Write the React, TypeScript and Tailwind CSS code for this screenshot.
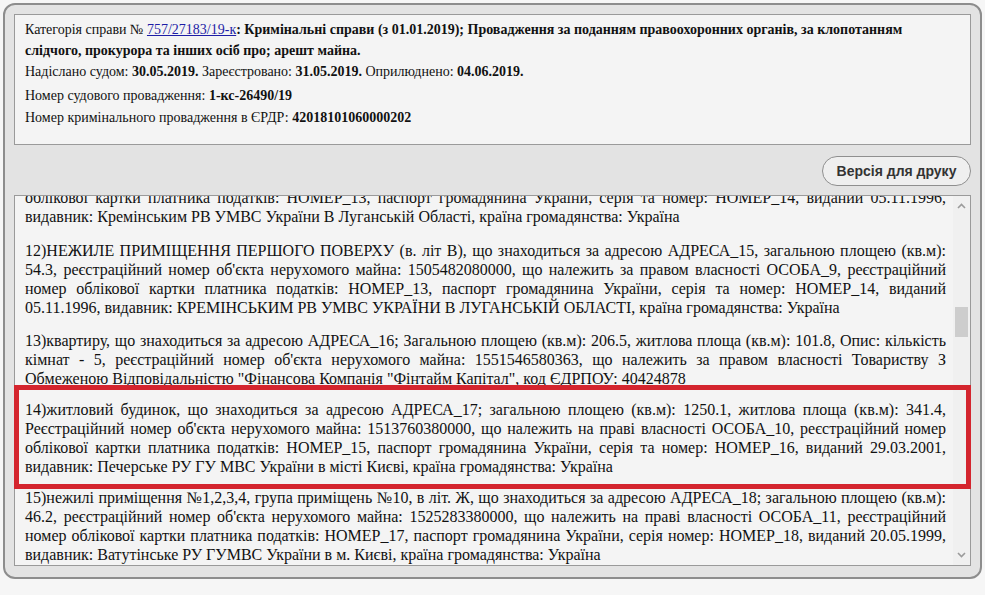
export default function App() {
  const paragraphs = [
    "12)НЕЖИЛЕ ПРИМІЩЕННЯ ПЕРШОГО ПОВЕРХУ (в. літ В), що знаходиться за адресою АДРЕСА_15, загальною площею (кв.м): 54.3, реєстраційний номер об'єкта нерухомого майна: 1505482080000, що належить за правом власності ОСОБА_9, реєстраційний номер облікової картки платника податків: НОМЕР_13, паспорт громадянина України, серія та номер: НОМЕР_14, виданий 05.11.1996, видавник: КРЕМІНСЬКИМ РВ УМВС УКРАЇНИ В ЛУГАНСЬКІЙ ОБЛАСТІ, країна громадянства: Україна",
    "13)квартиру, що знаходиться за адресою АДРЕСА_16; Загальною площею (кв.м): 206.5, житлова площа (кв.м): 101.8, Опис: кількість кімнат - 5, реєстраційний номер об'єкта нерухомого майна: 1551546580363, що належить за правом власності Товариству З Обмеженою Відповідальністю \"Фінансова Компанія \"Фінтайм Капітал\", код ЄДРПОУ: 40424878",
    "14)житловий будинок, що знаходиться за адресою АДРЕСА_17; загальною площею (кв.м): 1250.1, житлова площа (кв.м): 341.4, Реєстраційний номер об'єкта нерухомого майна: 1513760380000, що належить на праві власності ОСОБА_10, реєстраційний номер облікової картки платника податків: НОМЕР_15, паспорт громадянина України, серія та номер: НОМЕР_16, виданий 29.03.2001, видавник: Печерське РУ ГУ МВС України в місті Києві, країна громадянства: Україна",
    "15)нежилі приміщення №1,2,3,4, група приміщень №10, в літ. Ж, що знаходиться за адресою АДРЕСА_18; загальною площею (кв.м): 46.2, реєстраційний номер об'єкта нерухомого майна: 1525283380000, що належить на праві власності ОСОБА_11, реєстраційний номер облікової картки платника податків: НОМЕР_17, паспорт громадянина України, серія номер: НОМЕР_18, виданий 20.05.1999, видавник: Ватутінське РУ ГУМВС України в м. Києві, країна громадянства: Україна",
    "16)нежитлові приміщення, що знаходяться за адресою АДРЕСА_19; загальною площею (кв.м): 120.4, реєстраційний номер об'єкта нерухомого майна: 1530211480000, що належить на праві власності ОСОБА_12",
  ];
  const gaps = ["mb-[14px]", "mb-[12px]", "mb-[12px]", "mb-[12px]", "mb-[12px]"];

  return (
    <div className="h-[595px] w-[985px] bg-[#f6f6f6] pt-[3px] pl-[3px] font-[family-name:'Liberation_Serif',serif] text-[#111]">
      <div className="w-[979px] h-[576px] rounded-[12px] border-2 border-[#8d8d8d] bg-[#e3e3e3] p-[9px] flex flex-col">

        {/* Case header */}
        <div className="h-[131px] shrink-0 border border-[#9a9a9a] bg-[#f4f4f4] px-[10px] pt-[4px] text-[14px]">
          <div className="leading-[21px]">
            Категорія справи №{" "}
            <a href="#" className="text-[#1d1da6] underline">757/27183/19-к</a>
            <b>: Кримінальні справи (з 01.01.2019); Провадження за поданням правоохоронних органів, за клопотанням слідчого, прокурора та інших осіб про; арешт майна.</b>
          </div>
          <div className="leading-[22px]">
            Надіслано судом: <b>30.05.2019.</b> Зареєстровано: <b>31.05.2019.</b> Оприлюднено: <b>04.06.2019.</b>
          </div>
          <div className="leading-[22px] mt-[2px]">
            Номер судового провадження: <b>1-кс-26490/19</b>
          </div>
          <div className="leading-[22px]">
            Номер кримінального провадження в ЄРДР: <b>42018101060000202</b>
          </div>
        </div>

        {/* Print button */}
        <div className="flex justify-end mt-[11px] mb-[9px]">
          <button className="h-[30px] w-[149px] rounded-full border border-[#8f8f8f] bg-[#efefef] font-[family-name:'Liberation_Sans',sans-serif] text-[14px] font-bold text-[#333]">
            Версія для друку
          </button>
        </div>

        {/* Decision text */}
        <div className="relative h-[371px] border border-[#9a9a9a] bg-[#f4f4f4] flex">
          <div className="flex-1 overflow-hidden pl-[10px] pr-[7px] text-[16px] leading-[19px] text-justify">
            <p className="-mt-[8px] mb-[15px]">
              облікової картки платника податків: НОМЕР_13, паспорт громадянина України, серія та номер: НОМЕР_14, виданий 05.11.1996, видавник: Кремінським РВ УМВС України В Луганській Області, країна громадянства: Україна
            </p>
            {paragraphs.map((text, i) => (
              <p key={i} className={gaps[i]}>{text}</p>
            ))}
          </div>

          {/* Scrollbar */}
          <div className="w-[17px] shrink-0 bg-[#f0f0f0] flex flex-col items-center">
            <svg width="9" height="6" viewBox="0 0 9 6" className="mt-[7px]">
              <path d="M1 5L4.5 1.5L8 5" fill="none" stroke="#9b9b9b" strokeWidth="1.6" />
            </svg>
            <div className="mt-[98px] h-[30px] w-[13px] bg-[#cdcdcd]" />
            <div className="flex-1" />
            <svg width="9" height="6" viewBox="0 0 9 6" className="mb-[7px]">
              <path d="M1 1L4.5 4.5L8 1" fill="none" stroke="#9b9b9b" strokeWidth="1.6" />
            </svg>
          </div>

          {/* Highlight annotation */}
          <div className="absolute -left-[1px] -right-[1px] top-[189px] h-[104px] border-[5px] border-[#d4252e]" />
        </div>
      </div>
    </div>
  );
}
